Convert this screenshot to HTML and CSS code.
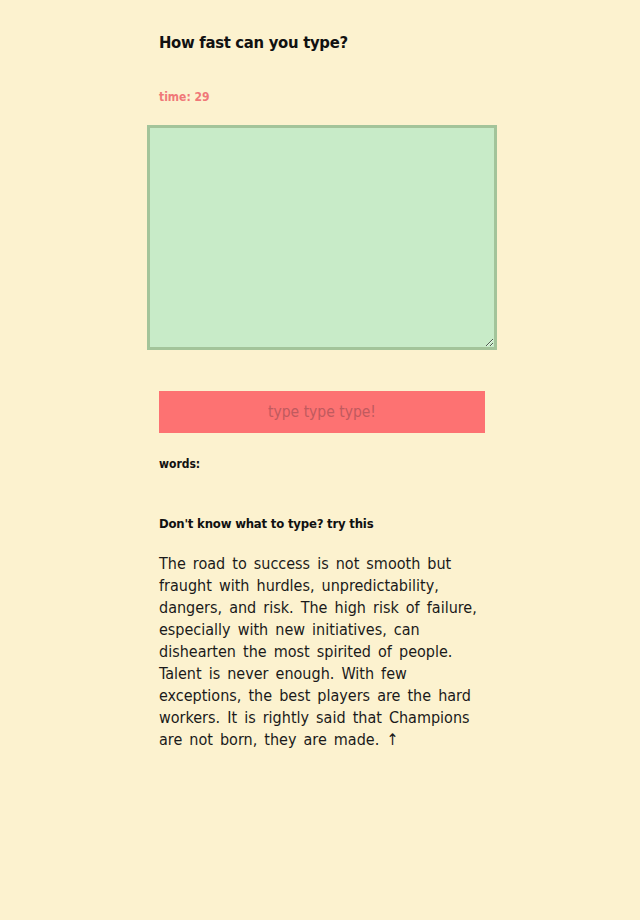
FILE: index.html
```html
<!DOCTYPE html>
<html>
<head>
<meta charset="utf-8">
<link rel="stylesheet" href="styles.css">
</head>
<body>
<main class="app">
  <h1 class="title">How fast can you type?</h1>
  <p class="timer">time: 29</p>
  <textarea class="box"></textarea>
  <div class="banner">type type type!</div>
  <p class="words">words:</p>
  <p class="hint">Don't know what to type? try this</p>
  <p class="sample">The road to success is not smooth but<br>fraught with hurdles, unpredictability,<br>dangers, and risk. The high risk of failure,<br>especially with new initiatives, can<br>dishearten the most spirited of people.<br>Talent is never enough. With few<br>exceptions, the best players are the hard<br>workers. It is rightly said that Champions<br>are not born, they are made. &#8593;</p>
</main>
</body>
</html>
```
FILE: styles.css
```css
html, body {
  margin: 0;
  padding: 0;
  background: #fcf2cf;
}
body {
  padding-left: 4px;
  font-family: "DejaVu Sans Condensed", "DejaVu Sans", sans-serif;
  color: #111;
}
.app {
  width: 350px;
  margin: 0 auto;
  display: flex;
  flex-direction: column;
}
.title {
  margin: 32px 12px 0;
  font-size: 16.5px;
  line-height: 22px;
  letter-spacing: -0.3px;
  font-weight: bold;
}
.timer {
  margin: 35px 12px 0;
  font-size: 12px;
  line-height: 16px;
  font-weight: bold;
  color: #f07878;
}
.box {
  margin: 20px 0 0;
  width: 350px;
  height: 225px;
  box-sizing: border-box;
  border: 3px solid #a3c49a;
  background: #c8ebc8;
  padding: 2px;
}
.banner {
  margin: 41px 12px 0;
  height: 42px;
  background: #fd7272;
  color: #c05a5e;
  font-size: 15.5px;
  display: flex;
  align-items: center;
  justify-content: center;
}
.words {
  margin: 23px 12px 0;
  font-size: 12px;
  line-height: 16px;
  font-weight: bold;
}
.hint {
  margin: 44px 12px 0;
  font-size: 13px;
  line-height: 16px;
  letter-spacing: -0.2px;
  font-weight: bold;
}
.sample {
  margin: 21px 12px 0;
  font-size: 16px;
  line-height: 22px;
  word-spacing: 2.5px;
  white-space: nowrap;
  color: #1a1a1a;
}
```
